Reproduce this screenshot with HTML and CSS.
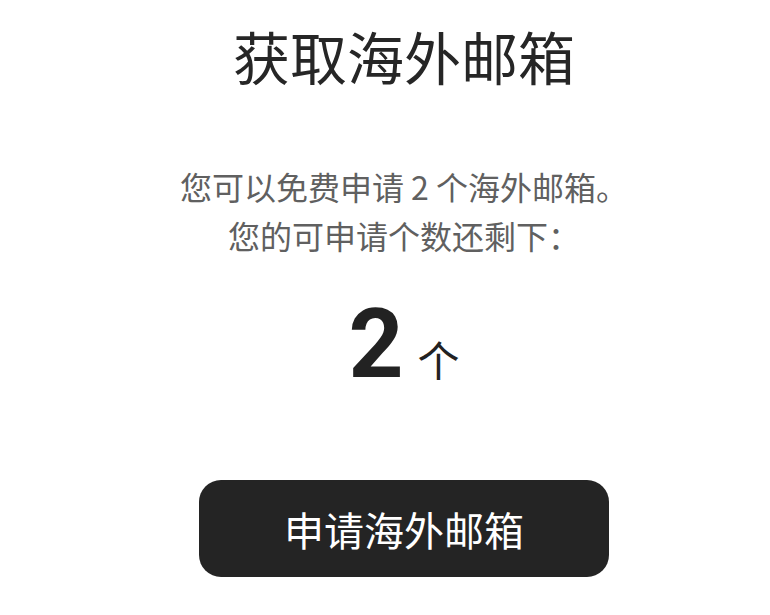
FILE: index.html
```html
<!DOCTYPE html>
<html lang="zh-CN">
<head>
<meta charset="utf-8">
<title>获取海外邮箱</title>
<link rel="stylesheet" href="styles.css">
</head>
<body>
<main class="page">
  <h1 class="title">获取海外邮箱</h1>
  <p class="desc">您可以免费申请 2 个海外邮箱。<br>您的可申请个数还剩下：</p>
  <div class="count">
    <span class="count-num">2</span>
    <span class="count-unit">个</span>
  </div>
  <button class="apply-btn" type="button">申请海外邮箱</button>
</main>
</body>
</html>
```

FILE: styles.css
```css
html, body {
  margin: 0;
  padding: 0;
  background: #ffffff;
}
body {
  font-family: "Noto Sans CJK SC", "Noto Sans", sans-serif;
  overflow: hidden;
}
.page {
  box-sizing: border-box;
  width: 808px;
  display: flex;
  flex-direction: column;
  align-items: center;
}
.title {
  margin: 20px 0 0;
  font-size: 57px;
  line-height: 70px;
  font-weight: 400;
  color: #262626;
}
.desc {
  margin: 72px 0 0;
  font-size: 32px;
  line-height: 49px;
  color: #606060;
  text-align: center;
}
.count {
  margin-top: 34px;
  display: flex;
  align-items: baseline;
  gap: 14px;
  height: 100px;
}
.count-num {
  font-family: Roboto, "Liberation Sans", sans-serif;
  font-weight: 700;
  font-size: 96px;
  line-height: 100px;
  color: #222222;
}
.count-unit {
  font-size: 42px;
  line-height: 100px;
  color: #222222;
}
.apply-btn {
  margin-top: 86px;
  width: 410px;
  height: 97px;
  border: none;
  border-radius: 22px;
  background: #242424;
  color: #ffffff;
  font-family: "Noto Sans CJK SC", "Noto Sans", sans-serif;
  font-size: 40px;
  font-weight: 400;
  padding: 0;
  cursor: pointer;
}
```
